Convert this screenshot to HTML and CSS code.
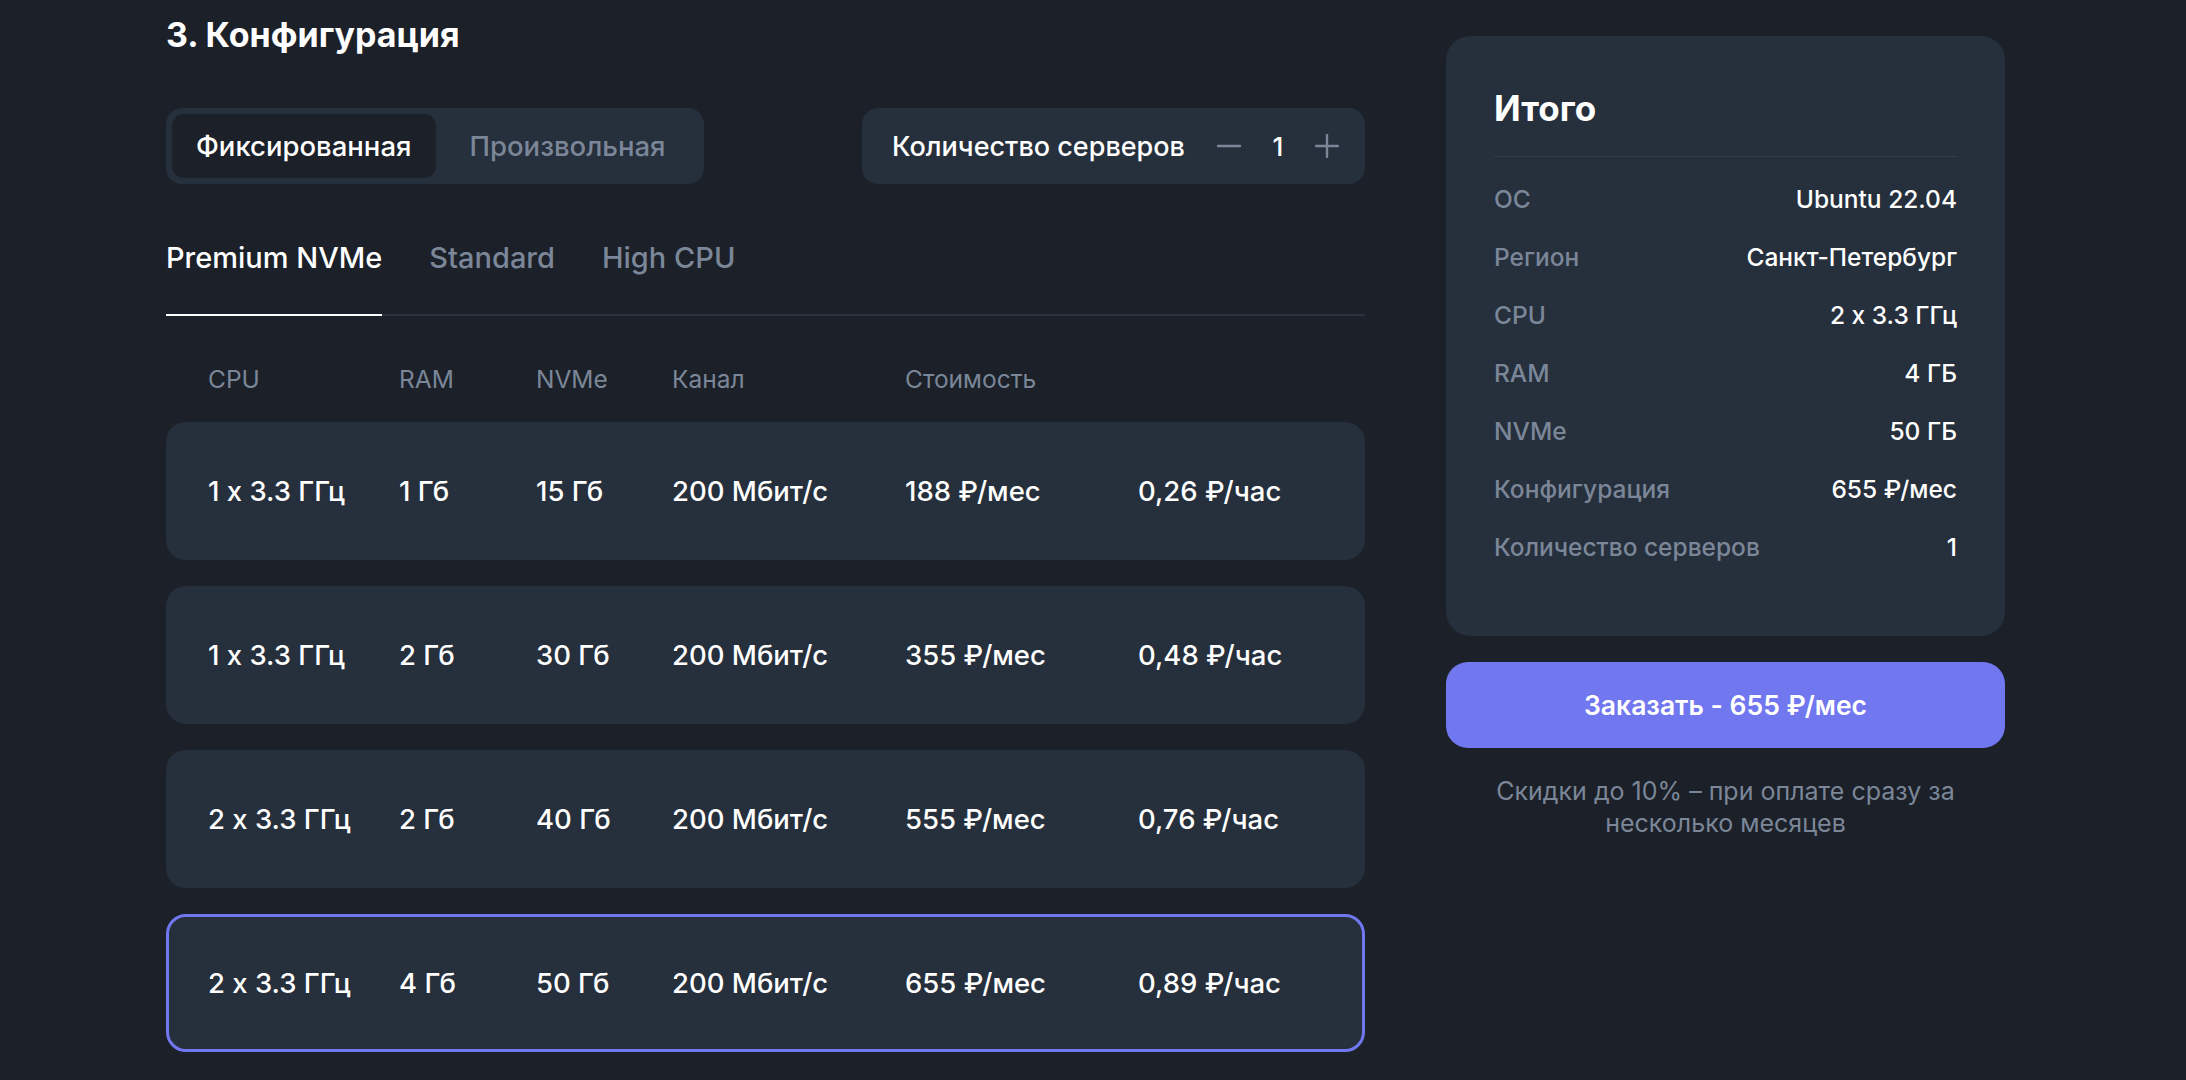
FILE: index.html
```html
<!DOCTYPE html>
<html lang="ru">
<head>
<meta charset="utf-8">
<title>Конфигурация</title>
<link rel="stylesheet" href="styles.css">
</head>
<body>
<div class="page">
  <main class="main">
    <h2 class="title">3. Конфигурация</h2>

    <div class="controls">
      <div class="segmented">
        <button class="seg seg-active">Фиксированная</button>
        <button class="seg">Произвольная</button>
      </div>
      <div class="counter">
        <span class="counter-label">Количество серверов</span>
        <div class="counter-ctrl">
          <svg class="icon" viewBox="0 0 24 24" width="24" height="24"><path d="M1 12H23" stroke="currentColor" stroke-width="2.6" stroke-linecap="round"/></svg>
          <span class="counter-value">1</span>
          <svg class="icon" viewBox="0 0 24 24" width="24" height="24"><path d="M1 12H23M12 1V23" stroke="currentColor" stroke-width="2.4" stroke-linecap="round"/></svg>
        </div>
      </div>
    </div>

    <nav class="tabs">
      <span class="tab tab-active">Premium NVMe</span>
      <span class="tab">Standard</span>
      <span class="tab">High CPU</span>
    </nav>

    <div class="grid head">
      <span>CPU</span><span>RAM</span><span>NVMe</span><span>Канал</span><span>Стоимость</span><span></span>
    </div>

    <div class="rows">
      <div class="grid row">
        <span>1 x 3.3 ГГц</span><span>1 Гб</span><span>15 Гб</span><span>200 Мбит/с</span><span>188 ₽/мес</span><span>0,26 ₽/час</span>
      </div>
      <div class="grid row">
        <span>1 x 3.3 ГГц</span><span>2 Гб</span><span>30 Гб</span><span>200 Мбит/с</span><span>355 ₽/мес</span><span>0,48 ₽/час</span>
      </div>
      <div class="grid row">
        <span>2 x 3.3 ГГц</span><span>2 Гб</span><span>40 Гб</span><span>200 Мбит/с</span><span>555 ₽/мес</span><span>0,76 ₽/час</span>
      </div>
      <div class="grid row row-selected">
        <span>2 x 3.3 ГГц</span><span>4 Гб</span><span>50 Гб</span><span>200 Мбит/с</span><span>655 ₽/мес</span><span>0,89 ₽/час</span>
      </div>
    </div>
  </main>

  <aside class="side">
    <div class="summary">
      <h3 class="summary-title">Итого</h3>
      <div class="summary-list">
        <div class="srow"><span class="slabel">ОС</span><span class="svalue">Ubuntu 22.04</span></div>
        <div class="srow"><span class="slabel">Регион</span><span class="svalue">Санкт-Петербург</span></div>
        <div class="srow"><span class="slabel">CPU</span><span class="svalue">2 x 3.3 ГГц</span></div>
        <div class="srow"><span class="slabel">RAM</span><span class="svalue">4 ГБ</span></div>
        <div class="srow"><span class="slabel">NVMe</span><span class="svalue">50 ГБ</span></div>
        <div class="srow"><span class="slabel">Конфигурация</span><span class="svalue">655 ₽/мес</span></div>
        <div class="srow"><span class="slabel">Количество серверов</span><span class="svalue">1</span></div>
      </div>
    </div>
    <button class="order">Заказать - 655 ₽/мес</button>
    <p class="note">Скидки до 10% – при оплате сразу за несколько месяцев</p>
  </aside>
</div>
</body>
</html>
```

FILE: styles.css
```css
* { box-sizing: border-box; }

html, body {
  margin: 0;
  padding: 0;
  background: #1b2029;
  color: #ffffff;
  font-family: Inter, "Noto Sans", sans-serif;
  font-feature-settings: "calt" 0;
  height: 100%;
  overflow: hidden;
}

.page {
  display: flex;
  gap: 81px;
  padding-left: 166px;
}

.main {
  width: 1199px;
  padding-top: 15px;
}

.title {
  margin: 0;
  font-size: 34px;
  line-height: 40px;
  font-weight: 700;
}

.controls {
  margin-top: 53px;
  display: flex;
  justify-content: space-between;
  align-items: center;
}

.segmented {
  display: flex;
  gap: 10px;
  padding: 6px 14px 6px 6px;
  background: #262f3c;
  border-radius: 16px;
  height: 76px;
}

.seg {
  border: 0;
  background: transparent;
  color: #7b8798;
  font-family: inherit;
  font-feature-settings: "calt" 0;
  font-size: 27.5px;
  font-weight: 500;
  padding: 0 24px;
  border-radius: 12px;
  height: 64px;
}

.seg-active {
  background: #1b2029;
  color: #ffffff;
}

.counter {
  width: 503px;
  height: 76px;
  background: #262f3c;
  border-radius: 16px;
  display: flex;
  align-items: center;
  justify-content: space-between;
  padding: 0 26px 0 30px;
}

.counter-label {
  font-size: 27px;
  font-weight: 500;
}

.counter-ctrl {
  display: flex;
  align-items: center;
  gap: 30px;
}

.icon {
  color: #7b8798;
  display: block;
}

.counter-value {
  font-size: 26px;
  font-weight: 500;
  min-width: 14px;
  text-align: center;
}

.tabs {
  margin-top: 56px;
  display: flex;
  gap: 47px;
  border-bottom: 2px solid #2c333f;
}

.tab {
  font-size: 29px;
  line-height: 36px;
  font-weight: 500;
  color: #7b8798;
  padding-bottom: 38px;
  margin-bottom: -2px;
  border-bottom: 2px solid transparent;
}

.tab-active {
  color: #ffffff;
  border-bottom-color: #ffffff;
}

.grid {
  display: grid;
  grid-template-columns: 191px 137px 136px 233px 233px 1fr;
  align-items: center;
  padding-left: 42px;
}

.head {
  margin-top: 47px;
  font-size: 24.5px;
  line-height: 32px;
  color: #7b8798;
}

.rows {
  margin-top: 27px;
  display: flex;
  flex-direction: column;
  gap: 26px;
}

.row {
  height: 138px;
  background: #262f3c;
  border-radius: 20px;
  font-size: 27.5px;
  font-weight: 500;
}

.row-selected {
  border: 3px solid #7177ef;
  padding-left: 39px;
}

.side {
  width: 559px;
  padding-top: 36px;
}

.summary {
  background: #262f3c;
  border-radius: 24px;
  padding: 52px 48px 73px;
}

.summary-title {
  margin: 0;
  font-size: 35px;
  line-height: 40px;
  font-weight: 700;
  padding-bottom: 28px;
  border-bottom: 1px solid #323b49;
}

.summary-list {
  margin-top: 26px;
  display: flex;
  flex-direction: column;
  gap: 26px;
}

.srow {
  display: flex;
  justify-content: space-between;
  font-size: 24.5px;
  line-height: 32px;
  font-weight: 500;
}

.slabel { color: #7b8798; }
.svalue { color: #ffffff; }

.order {
  display: block;
  width: 100%;
  margin-top: 26px;
  height: 86px;
  border: 0;
  border-radius: 22px;
  background: #7177ef;
  color: #ffffff;
  font-family: inherit;
  font-feature-settings: "calt" 0;
  font-size: 26.5px;
  font-weight: 600;
}

.note {
  margin: 27px auto 0;
  max-width: 500px;
  text-align: center;
  font-size: 25px;
  line-height: 32px;
  color: #7b8798;
}
```
